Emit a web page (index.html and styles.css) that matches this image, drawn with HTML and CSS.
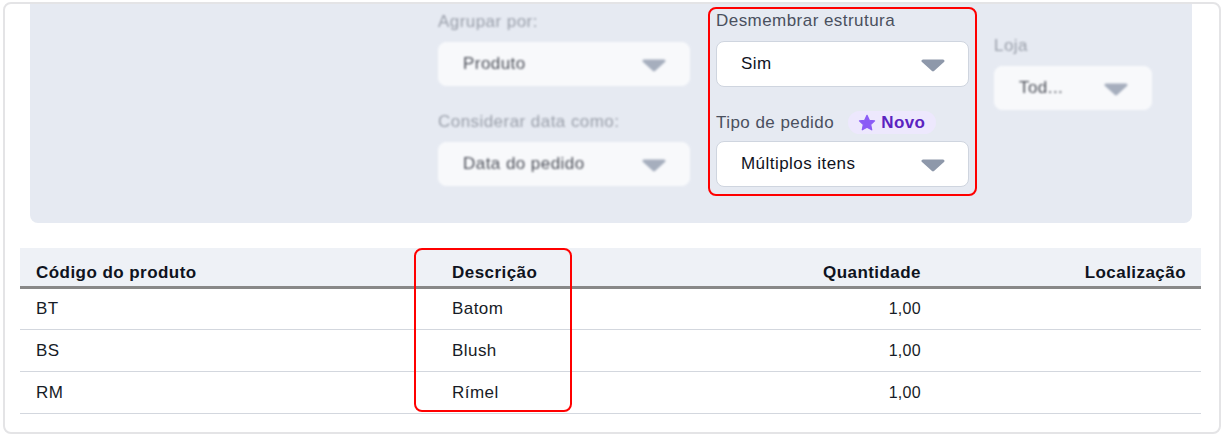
FILE: index.html
```html
<!DOCTYPE html>
<html lang="pt-BR">
<head>
    <meta charset="UTF-8">
    <meta name="viewport" content="width=device-width, initial-scale=1.0">
    <title>Relatório de produtos</title>
    <link rel="stylesheet" href="styles.css">
</head>
<body>

<div class="card">
    <div class="filters">
        <!-- faded column -->
        <div class="col col-a faded">
            <div class="field">
                <div class="label">Agrupar por:</div>
                <div class="select small">
                    <span>Produto</span>
                    <svg class="arrow" width="24" height="13" viewBox="0 0 24 13"><path d="M2 2 L22 2 L12 11 Z" fill="#8e98aa" stroke="#8e98aa" stroke-width="3" stroke-linejoin="round"/></svg>
                </div>
            </div>
            <div class="field second">
                <div class="label">Considerar data como:</div>
                <div class="select small">
                    <span>Data do pedido</span>
                    <svg class="arrow" width="24" height="13" viewBox="0 0 24 13"><path d="M2 2 L22 2 L12 11 Z" fill="#8e98aa" stroke="#8e98aa" stroke-width="3" stroke-linejoin="round"/></svg>
                </div>
            </div>
        </div>

        <!-- highlighted column -->
        <div class="col highlight">
            <div class="field">
                <div class="label">Desmembrar estrutura</div>
                <div class="select">
                    <span>Sim</span>
                    <svg class="arrow" width="24" height="13" viewBox="0 0 24 13"><path d="M2 2 L22 2 L12 11 Z" fill="#8e98aa" stroke="#8e98aa" stroke-width="3" stroke-linejoin="round"/></svg>
                </div>
            </div>
            <div class="field second">
                <div class="label-row">
                    <span class="label">Tipo de pedido</span>
                    <span class="badge">
                        <svg width="18" height="18" viewBox="0 0 24 24"><path d="M12 1.8l3.1 6.5 7 .9-5.2 4.9 1.4 7L12 17.6l-6.3 3.5 1.4-7-5.2-4.9 7-.9z" fill="#8b5cf6" stroke="#8b5cf6" stroke-width="1.6" stroke-linejoin="round"/></svg>
                        Novo
                    </span>
                </div>
                <div class="select">
                    <span>Múltiplos itens</span>
                    <svg class="arrow" width="24" height="13" viewBox="0 0 24 13"><path d="M2 2 L22 2 L12 11 Z" fill="#8e98aa" stroke="#8e98aa" stroke-width="3" stroke-linejoin="round"/></svg>
                </div>
            </div>
        </div>

        <!-- faded column -->
        <div class="col col-c faded">
            <div class="field">
                <div class="label">Loja</div>
                <div class="select small">
                    <span>Tod...</span>
                    <svg class="arrow" width="24" height="13" viewBox="0 0 24 13"><path d="M2 2 L22 2 L12 11 Z" fill="#8e98aa" stroke="#8e98aa" stroke-width="3" stroke-linejoin="round"/></svg>
                </div>
            </div>
        </div>
    </div>

    <div class="table-wrap">
        <table>
            <colgroup>
                <col class="w-code">
                <col class="w-desc">
                <col class="w-qty">
                <col>
            </colgroup>
            <thead>
                <tr>
                    <th>Código do produto</th>
                    <th>Descrição</th>
                    <th class="right">Quantidade</th>
                    <th class="right">Localização</th>
                </tr>
            </thead>
            <tbody>
                <tr>
                    <td>BT</td>
                    <td>Batom</td>
                    <td class="num">1,00</td>
                    <td></td>
                </tr>
                <tr>
                    <td>BS</td>
                    <td>Blush</td>
                    <td class="num">1,00</td>
                    <td></td>
                </tr>
                <tr>
                    <td>RM</td>
                    <td>Rímel</td>
                    <td class="num">1,00</td>
                    <td></td>
                </tr>
            </tbody>
        </table>
        <div class="col-mark"></div>
    </div>
</div>

</body>
</html>
```

FILE: styles.css
```css
body {
    margin: 0;
    background-color: #fff;
    font-family: "Liberation Sans", Arial, sans-serif;
    font-size: 17px;
    letter-spacing: 0.45px;
    color: #1b1f2a;
}
.card {
    box-sizing: border-box;
    width: 1218px;
    height: 432px;
    margin: 2px 0 0 3px;
    border: 2px solid #e4e4e6;
    border-radius: 8px;
    padding: 0 18px 0 15px;
    background-color: #fff;
}

/* filter panel */
.filters {
    display: flex;
    align-items: flex-start;
    height: 219px;
    margin: 0 9px 0 10px;
    padding: 3px 0 0 408px;
    box-sizing: border-box;
    background-color: #e6eaf2;
    border-radius: 0 0 8px 8px;
}
.col {
    display: flex;
    flex-direction: column;
}
.col-a {
    width: 252px;
    margin-top: 5px;
}
.col-a .second {
    margin-top: 26px;
}
.col-a .label {
    margin-bottom: 10px;
}
.highlight {
    width: 269px;
    box-sizing: border-box;
    margin-left: 18px;
    padding: 2px 6px 7px;
    border: 2px solid #ff0000;
    border-radius: 8px;
}
.highlight .second {
    margin-top: 24px;
}
.highlight .field > .label {
    margin-bottom: 10px;
}
.col-c {
    width: 158px;
    margin: 29px 0 0 17px;
}
.col-c .label {
    margin-bottom: 10px;
}
.faded {
    filter: blur(1.1px);
    opacity: 0.72;
}
.label {
    font-size: 17px;
    line-height: 20px;
    color: #4a505e;
}
.faded .label {
    color: #7c828e;
}
.label-row {
    display: flex;
    align-items: center;
    height: 23px;
    margin-bottom: 7px;
}
.badge {
    display: inline-flex;
    align-items: center;
    gap: 5px;
    height: 23px;
    margin-left: 14px;
    padding: 0 11px 0 10px;
    border-radius: 12px;
    background-color: #ede8fd;
    color: #5b23c0;
    font-size: 17px;
    font-weight: bold;
}
.select {
    display: flex;
    align-items: center;
    justify-content: space-between;
    box-sizing: border-box;
    height: 46px;
    padding: 0 23px 0 24px;
    background-color: #fff;
    border: 1px solid #cfd5df;
    border-radius: 8px;
    color: #10131d;
}
.select.small {
    height: 44px;
    border-color: #fff;
}
.arrow {
    display: block;
    margin-top: 2px;
}

/* table */
.table-wrap {
    position: relative;
    margin-top: 25px;
}
table {
    width: 100%;
    border-collapse: collapse;
    table-layout: fixed;
}
.w-code {
    width: 416px;
}
.w-desc {
    width: 250px;
}
.w-qty {
    width: 251px;
}
th {
    text-align: left;
    font-weight: bold;
    line-height: 18px;
    padding: 16px 16px 4px;
    background-color: #eef1f6;
    border-bottom: 3px solid #888;
    color: #0f1320;
}
th:last-child {
    padding-right: 15px;
}
td {
    height: 42px;
    box-sizing: border-box;
    padding: 0 16px;
    line-height: 18px;
    border-bottom: 1px solid #d3d7de;
    color: #171b26;
}
.right {
    text-align: right;
}
.num {
    text-align: right;
    font-size: 16px;
    letter-spacing: 0.3px;
}
.col-mark {
    position: absolute;
    left: 394px;
    top: 0;
    width: 158px;
    height: 164px;
    box-sizing: border-box;
    border: 2px solid #ff0000;
    border-radius: 8px;
}
```
